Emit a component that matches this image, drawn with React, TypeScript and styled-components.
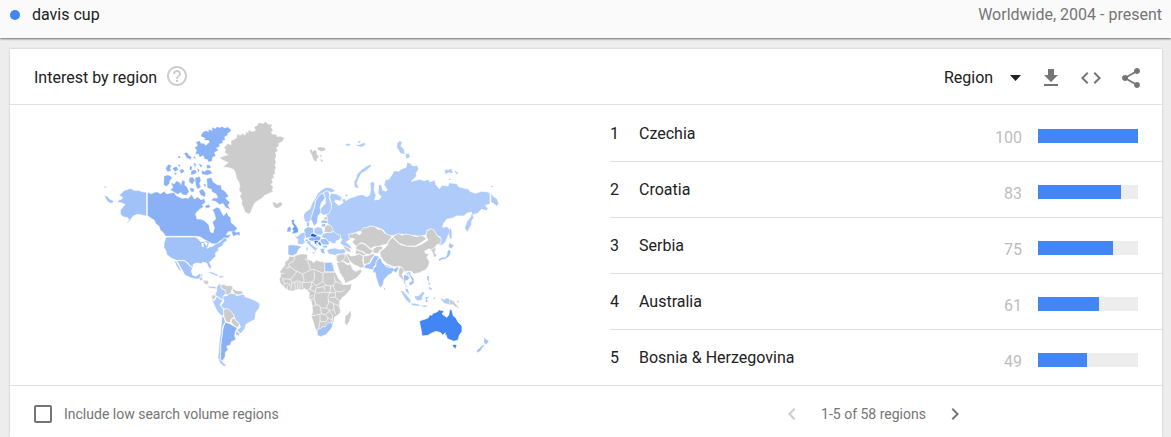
import React, { useState } from 'react';
import styled, { createGlobalStyle } from 'styled-components';

const GlobalStyle = createGlobalStyle`
  *, *::before, *::after { box-sizing: border-box; }
  body {
    margin: 0;
    background: #ededed;
    color: #212121;
    font: 16px/24px Roboto, "Liberation Sans", sans-serif;
  }
`;

const Page = styled.div`
  display: flex;
  flex-direction: column;
  min-height: 100vh;
`;

const TermBar = styled.header`
  display: flex;
  align-items: center;
  justify-content: space-between;
  height: 38px;
  padding: 0 9px 8px 10px;
  background: #fafafa;
  box-shadow: 0 1px 2px rgba(0, 0, 0, 0.55);
`;

const Term = styled.span`
  display: flex;
  align-items: center;
  gap: 12px;
`;

const Dot = styled.span`
  width: 10px;
  height: 10px;
  border-radius: 50%;
  background: #4285f4;
`;

const Scope = styled.span`
  color: #757575;
`;

const Card = styled.main`
  display: flex;
  flex-direction: column;
  flex: 1;
  margin: 11px 9px 0 10px;
  background: #fff;
  box-shadow: 0 0 2px rgba(0, 0, 0, 0.2);
`;

const CardHeader = styled.div`
  display: flex;
  align-items: center;
  justify-content: space-between;
  height: 56px;
  padding: 0 19px 0 24px;
  border-bottom: 1px solid #e0e0e0;
`;

const TitleGroup = styled.div`
  display: flex;
  align-items: flex-start;
  gap: 8px;
`;

const Title = styled.h2`
  margin: 0;
  padding-top: 2px;
  font-size: 16px;
  font-weight: 400;
`;

const Tools = styled.div`
  display: flex;
  align-items: center;
  gap: 16px;
  padding-top: 2px;
`;

const IconButton = styled.button<{ $color?: string }>`
  display: flex;
  width: 24px;
  height: 24px;
  padding: 0;
  border: 0;
  background: none;
  color: ${(p) => p.$color ?? '#757575'};
  cursor: pointer;
`;

const Icon = styled.svg`
  width: 24px;
  height: 24px;
  fill: currentColor;
`;

const SelectWrap = styled.label`
  display: grid;
  grid-template-columns: 1fr 24px;
  align-items: center;
  width: 83px;
  margin-right: -4px;

  select {
    grid-area: 1 / 1 / 2 / 3;
    appearance: none;
    padding: 0;
    border: 0;
    background: none;
    color: inherit;
    font: inherit;
  }

  svg {
    grid-area: 1 / 2;
    pointer-events: none;
  }
`;

const Split = styled.div`
  display: grid;
  grid-template-columns: 25fr 23fr;
`;

const WorldMap = styled.svg`
  display: block;
  width: 100%;
  height: 280px;
  stroke-linejoin: round;
`;

const RegionTable = styled.table`
  width: 100%;
  border-spacing: 0;

  td {
    height: 56px;
    padding: 1px 0 0;
    border-top: 1px solid #e0e0e0;
  }

  tr:first-child td { border-color: transparent; }
`;

const RankCell = styled.td`
  width: 29px;
`;

const NameCell = styled.td``;

const ScoreCell = styled.td`
  width: 141px;
`;

const Score = styled.div`
  display: flex;
  align-items: center;
  justify-content: flex-end;
  gap: 16px;
  padding: 7px 24px 0 0;
  color: #bdbdbd;
`;

const Track = styled.div`
  width: 100px;
  height: 14px;
  margin-bottom: 3px;
  background: #ededed;
`;

const Fill = styled.div`
  height: 100%;
  background: #4285f4;
`;

const CardFooter = styled.footer`
  display: grid;
  grid-template-columns: 25fr 23fr;
  align-items: center;
  padding: 16px 0 8px;
  border-top: 1px solid #e0e0e0;
  color: #757575;
  font-size: 14px;
`;

const CheckLabel = styled.label`
  display: flex;
  align-items: center;
  gap: 12px;
  padding-left: 24px;
`;

const Checkbox = styled.input`
  appearance: none;
  width: 18px;
  height: 18px;
  margin: 0 0 1px;
  border: 2px solid #757575;
  border-radius: 2px;

  &:checked { background: #4285f4; border-color: #4285f4; }
`;

const Pager = styled.nav`
  display: flex;
  align-items: center;
  justify-content: center;
  gap: 17px;
  padding-right: 25px;
`;

const C = {
  none: '#cccccc',
  low: '#aecbfa',
  mid: '#a1c2f8',
  high: '#8ab1f6',
  strong: '#6a9ff5',
  top: '#4285f4',
  peak: '#1a56d6',
};

type Shape = [string, string];
type Area = { x: number; y: number; shapes: Shape[]; islands?: boolean };

// Country outlines, grouped by part of the world; each group is drawn at a third of its own units.
// Island groups have no land borders, so they are edged in their own colour.
const AREAS: Area[] = [
  {
    x: 95,
    y: 115,
    shapes: [
      [C.mid, 'M155,232 142,230 130,226 118,226 105,220 96,224 88,226 80,234 72,240 84,248 80,252 70,256 68,262 80,264 90,268 84,276 76,286 76,298 86,306 98,308 102,314 92,328 104,318 114,304 128,298 140,300 155,304Z'],
      [C.high, 'M157,232 170,236 178,232 186,230 196,236 208,228 214,236 226,234 238,232 244,242 262,250 272,248 280,250 290,238 298,252 308,246 318,254 328,250 332,262 322,270 326,276 312,284 302,296 306,312 318,312 330,318 342,330 346,350 354,354 358,338 352,322 362,312 358,296 352,284 366,276 374,280 380,292 386,302 396,290 400,302 408,308 408,322 424,336 428,342 416,350 400,350 394,360 408,358 402,368 386,372 372,380 366,388 352,386 338,380 316,366 304,364 212,364 204,352 196,346 192,334 182,326 178,316 168,310 157,302Z'],
    ],
  },
  {
    x: 95,
    y: 115,
    islands: true,
    shapes: [
      [C.mid, 'M30,242 38,246 44,254 54,258 54,262 46,264 36,256Z M29,215h4v2h-4Z'],
      [C.high, 'M336,192 348,188 354,202 366,210 378,212 378,222 390,230 400,244 390,248 396,256 404,262 398,270 404,282 392,276 384,264 374,268 362,258 350,256 356,250 370,250 364,236 352,230 350,222 338,218Z'],
      [C.high, 'M324,52 334,48 342,52 341,44 352,48 352,38 362,42 366,36 376,40 379,35 390,40 398,37 408,45 403,52 396,55 398,59 387,66 390,74 382,76 382,84 372,86 373,94 363,98 369,106 357,112 361,122 352,126 350,138 341,140 337,132 330,132 325,120 314,126 311,116 302,117 306,106 300,98 309,92 304,82 313,78 318,86 327,86 332,92 344,82 341,75 328,75 332,70 318,63Z'],
      [C.high, 'M208,184 218,181 226,184 231,190 224,196 222,206 214,214 207,209Z M230,205 239,208 244,199 254,203 258,212 263,196 269,200 268,210 276,217 281,230 274,240 262,238 258,231 248,237 237,230 227,224 235,218Z'],
      [C.high, 'M320,167 328,171 336,165 346,167 351,175 336,179 322,177Z M335,151 344,151 347,158 337,160Z M284,189 293,187 299,196 292,207 283,200Z M301,189 313,185 317,196 312,206 317,216 308,221 303,210Z M286,219 297,222 295,231 287,228Z M313,228 322,223 331,234 329,245 318,240Z M326,207 333,210 330,215Z'],
      [C.high, 'M213,160 220,149 229,152 224,160 228,167 217,169Z M233,160 244,155 249,164 240,169Z M255,166 264,163 267,170 258,175Z M268,115 276,113 282,122 289,126 286,133 276,128Z M250,125 254,123 255,129 251,129Z M249,149 255,150 254,155Z M285,153 291,157 289,164 285,165Z M296,145 303,148 300,155Z M289,168 300,165 305,172 296,177 289,179Z M308,161 313,165 310,171Z M295,127 299,125 301,131Z M312,147 321,151 318,157Z M239,173 245,175 240,179Z M331,273 341,269 345,276 334,279Z M411,351 418,349 424,353 433,351 434,361 428,358 415,363Z'],
    ],
  },
  {
    x: 205,
    y: 115,
    islands: true,
    shapes: [
      [C.none, 'M88,74 96,68 97,58 106,62 112,56 121,62 124,52 131,55 131,46 142,51 153,47 149,36 157,33 162,24 174,27 182,21 190,29 201,29 197,37 203,46 197,52 203,59 214,59 214,66 226,65 237,69 231,79 220,85 220,93 213,98 217,108 210,112 213,122 209,132 212,142 208,150 212,158 208,166 210,175 203,180 206,188 198,192 203,202 196,208 204,216 200,225 204,229 190,235 179,240 170,249 156,257 148,264 142,276 138,287 133,296 121,291 116,276 111,266 112,256 105,244 111,236 103,226 106,214 104,204 96,190 92,172 86,162 72,157 56,155 65,148 71,142 53,134 46,128 59,124 71,120 60,112 63,104 58,98 68,87 80,91 79,78Z'],
      [C.none, 'M203,263 210,263 214,267 224,263 230,263 231,270 222,277 214,279 207,274Z'],
      [C.none, 'M315,107 320,103 322,111 330,105 335,110 334,118 341,124 336,130 333,140 326,134 322,122Z M337,99 346,97 359,99 361,105 350,109 340,104Z M345,119 349,122 348,127Z M347,133 352,135 353,141 348,138Z'],
    ],
  },
  {
    x: 320,
    y: 130,
    shapes: [
      [C.low, 'M22,250 30,240 34,222 28,200 34,190 50,192 66,202 62,214 46,210 44,216 56,226 70,218 64,208 74,206 78,212 90,204 104,200 112,196 128,194 140,200 148,196 152,180 150,160 158,154 164,160 162,180 168,196 164,210 178,208 184,200 174,190 176,164 184,164 188,180 198,184 202,180 192,164 196,150 206,148 216,134 222,122 236,124 246,116 258,112 262,96 270,100 278,108 292,106 296,118 288,130 290,138 274,154 300,148 312,152 324,148 330,156 344,150 348,164 358,176 366,166 384,168 388,158 412,162 416,170 446,178 450,184 466,190 484,184 504,186 510,190 510,222 496,226 504,236 500,242 484,238 474,250 458,254 462,264 456,270 454,284 442,308 434,294 440,276 452,260 456,246 440,250 432,258 410,258 398,264 380,268 370,282 368,292 382,290 390,300 384,318 378,334 368,344 360,346 352,340 362,322 344,314 338,300 322,300 318,314 300,320 280,316 266,320 246,312 224,316 208,318 198,312 190,300 170,292 150,288 134,296 130,306 116,304 108,308 88,314 92,328 78,336 90,346 98,358 76,352 60,340 66,328 56,318 36,308 30,290 20,276 16,262Z'],
    ],
  },
  {
    x: 320,
    y: 130,
    islands: true,
    shapes: [
      [C.low, 'M115,173 105,171 103,156 109,146 113,132 124,121 138,111 151,104 153,108 138,121 124,129 115,144 109,160Z M233,39 240,33 245,38 241,48 251,58 253,71 242,69 237,60 231,52Z M257,73 266,71 269,81 259,85Z M375,119 384,121 394,117 397,129 386,127 377,131Z M405,123 415,130 408,131Z M387,147h4v2h-4Z M514,192 520,201 530,207 535,221 530,227 520,219 514,216Z M513,169h4v2h-4Z M391,294 394,303 395,322 391,327 387,310Z M77,43 88,41 91,45 80,47Z M113,35 121,33 120,39Z M109,45 120,45 130,39 137,42 124,51Z M75,197 81,193 81,199Z M392,344l4,8 -4,4Z'],
    ],
  },
  {
    x: 330,
    y: 220,
    shapes: [
      [C.none, 'M56,42 66,42 76,38 88,44 94,40 92,32 100,24 116,22 120,18 134,20 144,28 156,28 164,40 176,44 186,50 176,62 172,72 154,76 146,80 132,80 122,86 106,72 94,68 88,72 84,82 74,74 66,66 74,58 66,54 58,58Z'],
      [C.none, 'M86,72 98,70 108,76 120,88 132,88 126,98 118,104 108,102 98,94 84,92 76,84Z M78,88 94,94 110,104 100,108 86,102 76,104Z M128,86 140,80 156,78 158,86 148,92 146,100 134,100 126,94Z'],
      [C.none, 'M176,64 188,52 202,66 212,74 230,78 256,80 276,72 294,60 288,48 290,34 302,26 312,30 322,48 334,56 332,70 320,74 314,86 304,90 296,86 284,94 286,100 298,102 290,112 298,124 296,138 286,150 268,158 252,162 244,154 232,154 222,156 214,142 204,140 190,140 172,132 160,122 150,104 150,94 162,86 172,76Z'],
      [C.none, 'M188,50 206,40 216,46 228,42 238,44 260,50 276,46 290,56 276,66 256,78 230,78 208,70Z'],
      [C.none, 'M302,90 314,82 318,90 314,96 320,106 316,112 310,110 308,98Z M296,162 300,158 300,166Z'],
      [C.none, 'M48,104 54,100 62,108 76,106 88,102 100,108 98,122 104,142 92,144 82,138 72,134 62,126 54,116Z M100,108 116,106 130,100 134,106 124,116 120,128 106,134 100,128Z'],
      [C.mid, 'M102,144 106,134 120,130 126,118 134,106 144,108 148,114 140,122 138,134 130,142 132,150 120,148Z'],
      [C.mid, 'M138,126 146,114 154,116 156,126 168,138 186,142 192,146 208,138 204,150 198,160 190,152 186,160 174,166 162,180 160,192 152,204 146,196 138,172 136,158 128,158 130,146 138,138Z'],
      [C.none, 'M164,132 184,140 182,144 168,140Z M206,148 214,140 222,152 216,164 222,176 222,188 216,178 206,168Z M226,156 234,158 240,170 232,166Z'],
      [C.mid, 'M220,166 228,164 240,172 232,182 226,182 228,196 234,202 228,202 222,188Z M232,154 242,156 242,164 252,176 252,190 240,198 236,190 246,182 240,170Z'],
      [C.top, 'M268,304 276,300 284,298 294,294 300,284 306,286 308,280 316,278 324,274 326,269 338,272 342,274 336,282 350,292 356,286 360,266 366,272 370,288 378,294 384,306 396,318 396,334 388,346 384,360 372,364 362,360 352,356 348,344 344,350 346,338 338,346 332,338 318,334 304,340 294,346 276,348 274,332Z'],
      [C.none, 'M16,108 30,102 50,104 56,118 62,128 52,130 38,122 24,126 18,120Z M20,130 26,122 38,124 52,134 62,132 68,148 76,154 92,148 96,154 88,166 76,176 60,184 46,190 40,174 30,160Z'],
    ],
  },
  {
    x: 330,
    y: 220,
    islands: true,
    shapes: [
      [C.mid, 'M327,118 336,113 346,113 352,105 354,93 358,89 361,98 357,108 350,113 344,117 336,117 328,122Z M357,81 359,69 366,75 371,76 364,83Z M162,203 165,207 163,209Z M227,206 232,207 237,221 230,215Z'],
      [C.low, 'M213,213 220,215 231,228 241,240 241,249 230,241 223,230Z M243,251 254,251 269,255 267,257 248,255Z M255,229 266,229 278,215 283,220 277,228 275,239 264,241 257,237Z M287,231 297,231 290,236 293,245 288,247Z M291,169 297,169 297,183 293,181Z M297,201 305,205 304,209 298,207Z M333,235 342,240 352,235 357,238 357,253 344,249 335,240Z M295,187 301,191 298,195Z M275,257 291,257 284,261Z M311,233h4v3h-4Z'],
      [C.none, 'M359,239 370,243 376,252 387,263 376,259 368,253 359,253Z M381,244 387,243 384,249Z M61,273 63,284 57,304 50,315 45,308 47,288 54,284Z'],
      [C.top, 'M369,375 379,375 376,385 371,381Z'],
      [C.mid, 'M463,353 468,359 475,362 472,369 466,373 463,366Z M459,375 463,376 456,383 450,393 442,397 441,392Z'],
    ],
  },
  {
    x: 270,
    y: 180,
    shapes: [
      [C.strong, 'M64,120 74,118 72,128 80,138 86,150 84,158 64,162 70,152 66,146 72,140 66,132Z'],
      [C.high, 'M52,144 60,138 64,146 62,156 50,156Z'],
      [C.low, 'M104,122 100,108 104,98 120,86 126,70 134,58 142,42 154,30 168,22 184,24 196,32 186,38 172,34 160,38 150,46 138,62 134,80 128,96 124,120 112,130Z'],
      [C.mid, 'M130,134 122,116 128,98 134,80 138,60 150,44 160,40 166,54 154,68 150,84 156,94 144,108 142,128 134,138Z'],
      [C.low, 'M160,38 172,32 178,40 178,54 184,72 184,86 176,102 160,106 152,98 152,86 166,70 166,52Z'],
      [C.none, 'M160,112 172,110 172,120 162,120Z M164,142 172,134 182,136 190,150 180,160 162,156Z'],
      [C.mid, 'M152,122 162,120 174,122 172,130 154,130Z M154,132 168,130 166,140 156,142Z M110,128 118,124 118,138 110,140Z'],
      [C.mid, 'M102,148 114,140 130,144 132,158 122,162 126,172 108,174 102,162Z'],
      [C.low, 'M72,170 84,168 92,160 104,156 106,172 102,178 106,188 96,194 82,192 84,178Z'],
      [C.mid, 'M54,196 64,194 82,196 96,200 86,208 80,222 66,228 54,224Z'],
      [C.low, 'M132,146 144,140 156,144 160,158 154,166 140,164 132,158Z M158,162 168,158 182,158 192,154 200,162 212,166 210,178 198,184 196,192 186,190 180,184 172,188 170,178 154,172Z'],
      [C.high, 'M116,174 128,170 146,168 154,172 150,182 138,184 116,182Z M106,178 116,178 116,184 106,184Z'],
      [C.low, 'M106,186 116,182 124,184 122,190 132,198 144,206 138,210 140,216 134,212 126,204 114,192Z M126,216 136,216 134,222 126,220Z M108,202 114,200 114,212 108,212Z'],
      [C.mid, 'M152,176 168,176 178,188 176,196 158,194 150,184Z M158,196 174,196 170,204 158,204Z M150,206 166,204 162,212 166,220 158,222 152,214Z'],
      [C.peak, 'M120,164 128,160 142,166 136,172 124,170Z M132,182 144,182 144,188 138,188 148,200 134,190Z'],
      [C.top, 'M146,184 152,188 156,198 148,196 144,190Z'],
      [C.low, 'M170,210 180,206 194,204 208,208 220,206 228,214 222,222 204,222 196,226 176,222Z'],
      [C.none, 'M218,198 228,200 240,206 244,216 234,216 224,208Z M200,226 214,222 226,222 224,236 208,248 200,242Z'],
    ],
  },
  {
    x: 150,
    y: 225,
    shapes: [
      [C.mid, 'M48,36 136,36 146,42 156,42 160,50 168,46 178,52 174,66 188,64 198,56 212,50 220,40 228,38 232,46 222,54 216,64 204,70 206,76 196,84 198,94 186,104 178,112 184,124 182,134 174,124 170,114 158,112 154,116 140,114 130,118 128,128 120,122 112,112 102,106 78,106 62,98 50,88 48,78 42,68 42,54Z'],
      [C.mid, 'M80,107 102,107 112,114 120,124 128,128 124,138 128,150 138,154 148,146 160,146 156,156 148,162 138,162 122,158 104,150 98,138 90,124Z M72,106 80,110 86,122 94,136 90,138 80,124Z'],
      [C.low, 'M146,160 154,156 160,162 152,168Z M170,178 178,184 192,184 202,188 200,192 188,190 178,190Z M172,142 184,140 194,144 206,150 200,154 188,148Z M206,152 220,152 220,158 208,158Z'],
      [C.none, 'M158,166 172,166 176,172 172,180 164,176Z M152,148 158,148 156,156 150,156Z'],
      [C.low, 'M200,186 208,176 214,178 214,190 228,196 232,206 222,210 222,226 208,218 194,210 200,198Z'],
      [C.none, 'M212,180 222,178 230,182 246,182 250,190 244,196 244,204 234,212 228,206 226,196 214,190Z M248,188 256,196 276,198 280,206 266,210 254,208 248,198Z M186,210 196,210 198,216 192,224 184,222Z'],
      [C.low, 'M186,226 194,226 200,214 208,220 218,226 210,240 220,252 222,268 216,274 202,260 194,244Z'],
      [C.low, 'M222,228 218,214 232,212 240,204 252,206 262,212 276,208 282,208 286,216 300,220 318,228 330,236 328,248 318,262 314,284 298,292 288,298 284,312 272,326 260,316 272,306 264,292 256,286 250,268 236,256 224,252 212,244Z'],
      [C.none, 'M220,254 232,250 248,264 254,276 244,282 240,294 228,290 222,276Z M244,282 254,280 258,288 268,296 264,308 254,304 244,292Z M258,318 270,324 268,334 256,330Z'],
      [C.high, 'M226,292 240,296 252,304 262,308 256,320 254,332 258,344 244,350 242,360 230,364 234,374 226,382 226,394 218,408 210,402 212,384 212,360 216,330 220,306Z'],
      [C.mid, 'M216,272 222,278 226,290 218,306 216,330 212,360 212,384 210,402 218,412 230,422 222,424 210,414 204,398 206,380 208,350 212,320Z'],
    ],
  },
  {
    x: 270,
    y: 240,
    shapes: [
      [C.none, 'M58,48 68,50 78,46 92,42 108,42 112,46 112,58 126,62 130,68 140,60 150,64 164,66 186,66 192,78 192,88 200,104 206,116 216,128 220,134 246,132 242,148 228,164 216,174 210,184 208,200 212,212 210,220 194,232 192,244 188,256 184,266 170,282 152,290 142,286 140,274 134,262 130,246 124,230 128,214 126,200 124,184 116,172 118,158 112,152 104,146 96,150 84,148 66,154 52,150 40,140 30,128 28,118 32,108 30,94 44,76 46,64 54,60Z'],
      [C.mid, 'M164,66 174,68 186,66 188,74 194,96 164,96Z M142,268 152,266 156,260 166,260 172,250 184,246 188,258 182,268 168,284 152,290 142,286Z'],
    ],
  },
];

// Borders between the African countries.
const AFRICAN_BORDERS =
  'M76,46 72,62 56,72 58,82 46,84M58,78 76,92 80,96 62,118 36,116M76,92 98,102 122,90 114,64 104,56M122,90 132,88 160,100 164,96M132,92 134,112 128,126 138,138 158,124 160,100M98,102 102,122 96,128 98,146M96,128 126,126 120,148M62,118 66,130 62,152M36,116 44,130 40,140M66,130 82,122 94,126M82,126 84,148M44,130 58,132 60,140M52,150 52,138M158,124 168,136 190,138 196,124 192,110M164,96H194M196,124 208,130 220,134M190,138 196,154 214,156 226,148M120,148 136,156 138,144 160,140 168,136M136,156 132,176 122,178M140,160 160,156 180,158 182,138M132,176 138,194 126,200M180,158 174,170 176,190 168,204 152,204 148,196 138,194M180,158 196,158 196,172 180,172M196,172 210,184M174,182 190,190 208,198M190,190 192,206 184,212 168,204M192,206 196,222M152,204 154,222 124,228M154,222 166,224 180,212M150,226 150,244 146,266M150,244 168,246 174,234 166,224M174,234 188,240M176,212 188,226 186,248M90,126 90,148M74,126 76,150M30,100 44,100M112,152 130,136M118,170 128,166M164,150 164,140';

const LAKES = 'M146,44 154,42 162,48 152,50ZM156,54 160,54 160,66 156,64ZM164,50 172,54 170,62 166,58ZM170,68 178,66 174,70Z';

function Map() {
  return (
    <WorldMap viewBox="10 105 600 280" role="img" aria-label="World map of interest by region">
      {AREAS.map((area, i) => (
        <g key={i} transform={`translate(${area.x} ${area.y}) scale(0.33333)`}>
          {area.shapes.map(([fill, d]) => (
            <path
              key={d}
              d={d}
              fill={fill}
              stroke={area.islands ? fill : '#fff'}
              strokeWidth={area.islands ? 1 : 2}
            />
          ))}
        </g>
      ))}
      <g transform="translate(150 225) scale(0.33333)">
        <path d={LAKES} fill="#fff" stroke="#fff" strokeWidth="2" />
      </g>
      <g transform="translate(270 240) scale(0.33333)">
        <path d={AFRICAN_BORDERS} fill="none" stroke="#fff" strokeWidth="2" />
      </g>
    </WorldMap>
  );
}

const REGIONS = [
  { name: 'Czechia', score: 100 },
  { name: 'Croatia', score: 83 },
  { name: 'Serbia', score: 75 },
  { name: 'Australia', score: 61 },
  { name: 'Bosnia & Herzegovina', score: 49 },
];

function Glyph({ d }: { d: string }) {
  return (
    <Icon viewBox="0 0 24 24" aria-hidden="true">
      <path d={d} />
    </Icon>
  );
}

export default function App() {
  const [lowVolume, setLowVolume] = useState(false);
  return (
    <Page>
      <GlobalStyle />
      <TermBar>
        <Term>
          <Dot />
          davis cup
        </Term>
        <Scope>Worldwide, 2004 - present</Scope>
      </TermBar>
      <Card>
        <CardHeader>
          <TitleGroup>
            <Title>Interest by region</Title>
            <IconButton $color="#cccccc" aria-label="Help">
              <Glyph d="M11 18h2v-2h-2v2zm1-16C6.48 2 2 6.48 2 12s4.48 10 10 10 10-4.480 10-10S17.520 2 12 2zm0 18c-4.410 0-8-3.590-8-8s3.590-8 8-8 8 3.590 8 8-3.590 8-8 8zm0-14c-2.210 0-4 1.790-4 4h2c0-1.100.9-2 2-2s2 .9 2 2c0 2-3 1.750-3 5h2c0-2.250 3-2.500 3-5 0-2.210-1.790-4-4-4z" />
            </IconButton>
          </TitleGroup>
          <Tools>
            <SelectWrap>
              <select aria-label="Resolution" defaultValue="region">
                <option value="region">Region</option>
                <option value="city">City</option>
              </select>
              <Glyph d="M7 9l5.500 6 5.500-6z" />
            </SelectWrap>
            <IconButton aria-label="Download">
              <Glyph d="M19 9h-4V3H9v6H5l7 7 7-7zM5 18v2h14v-2H5z" />
            </IconButton>
            <IconButton aria-label="Embed">
              <Glyph d="M9.400 16.600L4.800 12l4.600-4.600L8 6l-6 6 6 6 1.400-1.400zm5.200 0l4.600-4.600-4.600-4.600L16 6l6 6-6 6-1.400-1.400z" />
            </IconButton>
            <IconButton aria-label="Share">
              <Glyph d="M18 16.080c-.76 0-1.440.3-1.960.77L8.910 12.700c.05-.23.09-.46.09-.7s-.04-.47-.09-.7l7.050-4.110c.54.5 1.250.81 2.040.81 1.660 0 3-1.340 3-3s-1.340-3-3-3-3 1.340-3 3c0 .24.04.47.09.7L8.040 9.810C7.500 9.310 6.790 9 6 9c-1.660 0-3 1.340-3 3s1.340 3 3 3c.79 0 1.500-.31 2.040-.81l7.120 4.160c-.05.21-.08.43-.08.65 0 1.610 1.310 2.920 2.920 2.920s2.920-1.310 2.920-2.920-1.310-2.920-2.920-2.920z" />
            </IconButton>
          </Tools>
        </CardHeader>
        <Split>
          <Map />
          <RegionTable>
            <tbody>
              {REGIONS.map((region, i) => (
                <tr key={region.name}>
                  <RankCell>{i + 1}</RankCell>
                  <NameCell>{region.name}</NameCell>
                  <ScoreCell>
                    <Score>
                      {region.score}
                      <Track>
                        <Fill style={{ width: `${region.score}%` }} />
                      </Track>
                    </Score>
                  </ScoreCell>
                </tr>
              ))}
            </tbody>
          </RegionTable>
        </Split>
        <CardFooter>
          <CheckLabel>
            <Checkbox type="checkbox" checked={lowVolume} onChange={(e) => setLowVolume(e.target.checked)} />
            Include low search volume regions
          </CheckLabel>
          <Pager aria-label="Pages">
            <IconButton $color="#cccccc" aria-label="Previous">
              <Glyph d="M15.410 7.410L14 6l-6 6 6 6 1.410-1.410L10.830 12z" />
            </IconButton>
            1-5 of 58 regions
            <IconButton aria-label="Next">
              <Glyph d="M10 6L8.590 7.410 13.170 12l-4.580 4.590L10 18l6-6z" />
            </IconButton>
          </Pager>
        </CardFooter>
      </Card>
    </Page>
  );
}
